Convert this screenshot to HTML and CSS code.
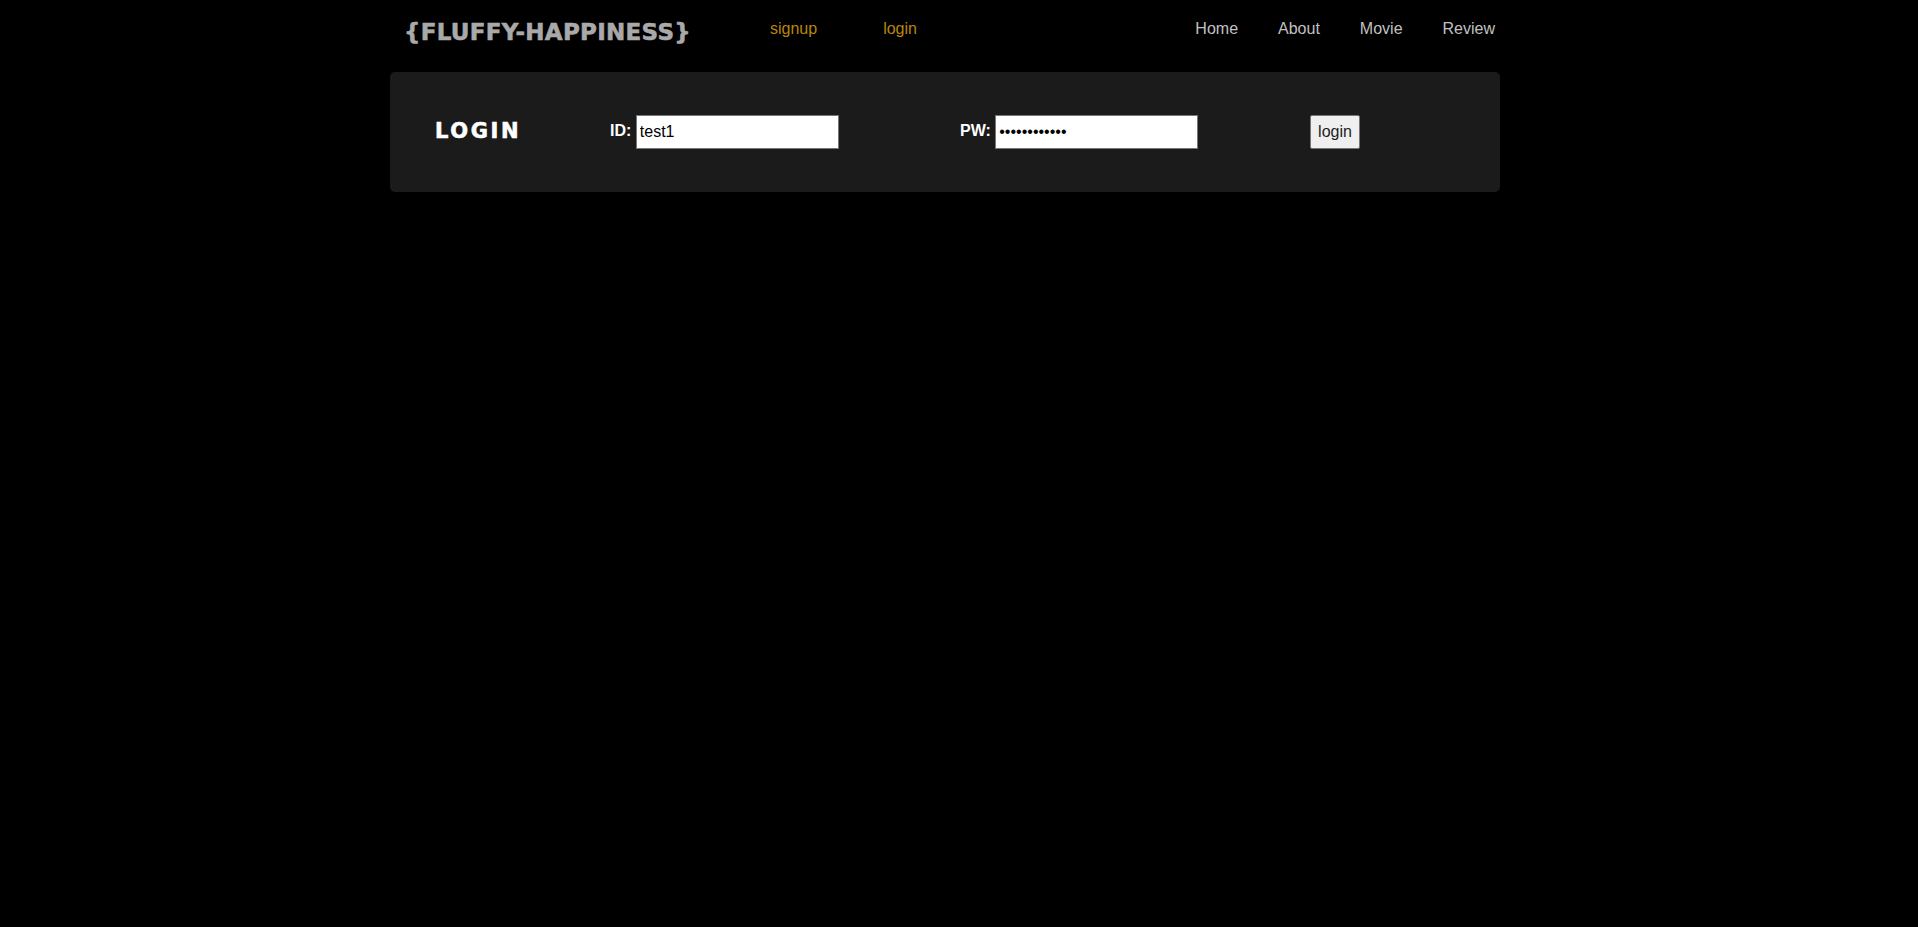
FILE: index.html
```
<!DOCTYPE html>
<html lang="en">

<head>
    <meta charset="UTF-8">
    <meta name="viewport" content="width=device-width, initial-scale=1.0">
    <title>fluffy-happiness</title>
    <link rel="stylesheet" href="styles.css">
</head>

<body>

    <div class="wrap">
        <header class="top-bar">
            <a class="logo" href="/">{FLUFFY-HAPPINESS}</a>
            <a class="user-link signup" href="/signup">signup</a>
            <a class="user-link" href="/login">login</a>

            <nav class="main-nav">
                <a href="/">Home</a>
                <a href="/about">About</a>
                <a href="/movie">Movie</a>
                <a href="/review">Review</a>
            </nav>
        </header>

        <form class="login-box" action="/login" method="post">
            <h2 class="login-title">LOGIN</h2>

            <div class="field">
                <label for="userId">ID:</label>
                <input type="text" id="userId" name="userId" value="test1">
            </div>

            <div class="field">
                <label for="userPw">PW:</label>
                <input type="password" id="userPw" name="userPw" value="123412341234">
            </div>

            <div class="field">
                <!-- submit -->
                <button type="submit">login</button>
            </div>
        </form>
    </div>

</body>

</html>
```

FILE: styles.css
```
body {
    background-color: #000;
    margin: 0;
    font-family: "Liberation Sans", Arial, sans-serif;
    font-size: 16px;
}

a {
    text-decoration: none;
}

.wrap {
    width: 1110px;
    margin-left: calc(50% - 569px);
}

.top-bar {
    height: 58px;
    display: flex;
    align-items: center;
}

.logo {
    font-family: "DejaVu Sans", sans-serif;
    font-weight: bold;
    font-size: 23px;
    letter-spacing: 0.3px;
    -webkit-text-stroke: 0.6px #a9a9a9;
    color: #a9a9a9;
    margin-left: 14px;
    margin-top: 5px;
}

.user-link {
    color: #b8860b;
    margin-left: 66px;
}

.user-link.signup {
    margin-left: 79px;
}

.main-nav {
    margin-left: auto;
    margin-right: 5px;
    display: flex;
    gap: 40px;
}

.main-nav a {
    color: #c0c0c0;
}

.login-box {
    margin: 14px 0 0;
    height: 120px;
    background-color: #1b1b1b;
    border-radius: 5px;
    box-sizing: border-box;
    padding-left: 45px;
    display: grid;
    grid-template-columns: 175px 350px 350px 1fr;
    align-items: center;
}

.login-title {
    margin: 0 0 3px;
    font-family: "DejaVu Sans", sans-serif;
    font-weight: bold;
    font-size: 21px;
    letter-spacing: 2.6px;
    -webkit-text-stroke: 0.6px #fff;
    color: #fff;
}

.field label {
    color: #fff;
    font-weight: bold;
}

.field input {
    box-sizing: border-box;
    width: 203px;
    height: 34px;
    padding: 0 3px;
    border: 1px solid #767676;
    font-family: "Liberation Sans", Arial, sans-serif;
    font-size: 16px;
    color: #000;
    vertical-align: middle;
}

.field button {
    box-sizing: border-box;
    height: 34px;
    width: 50px;
    padding: 0;
    background-color: #efefef;
    border: 1px solid #767676;
    border-radius: 2px;
    font-family: "Liberation Sans", Arial, sans-serif;
    font-size: 16px;
    color: #222;
}
```
